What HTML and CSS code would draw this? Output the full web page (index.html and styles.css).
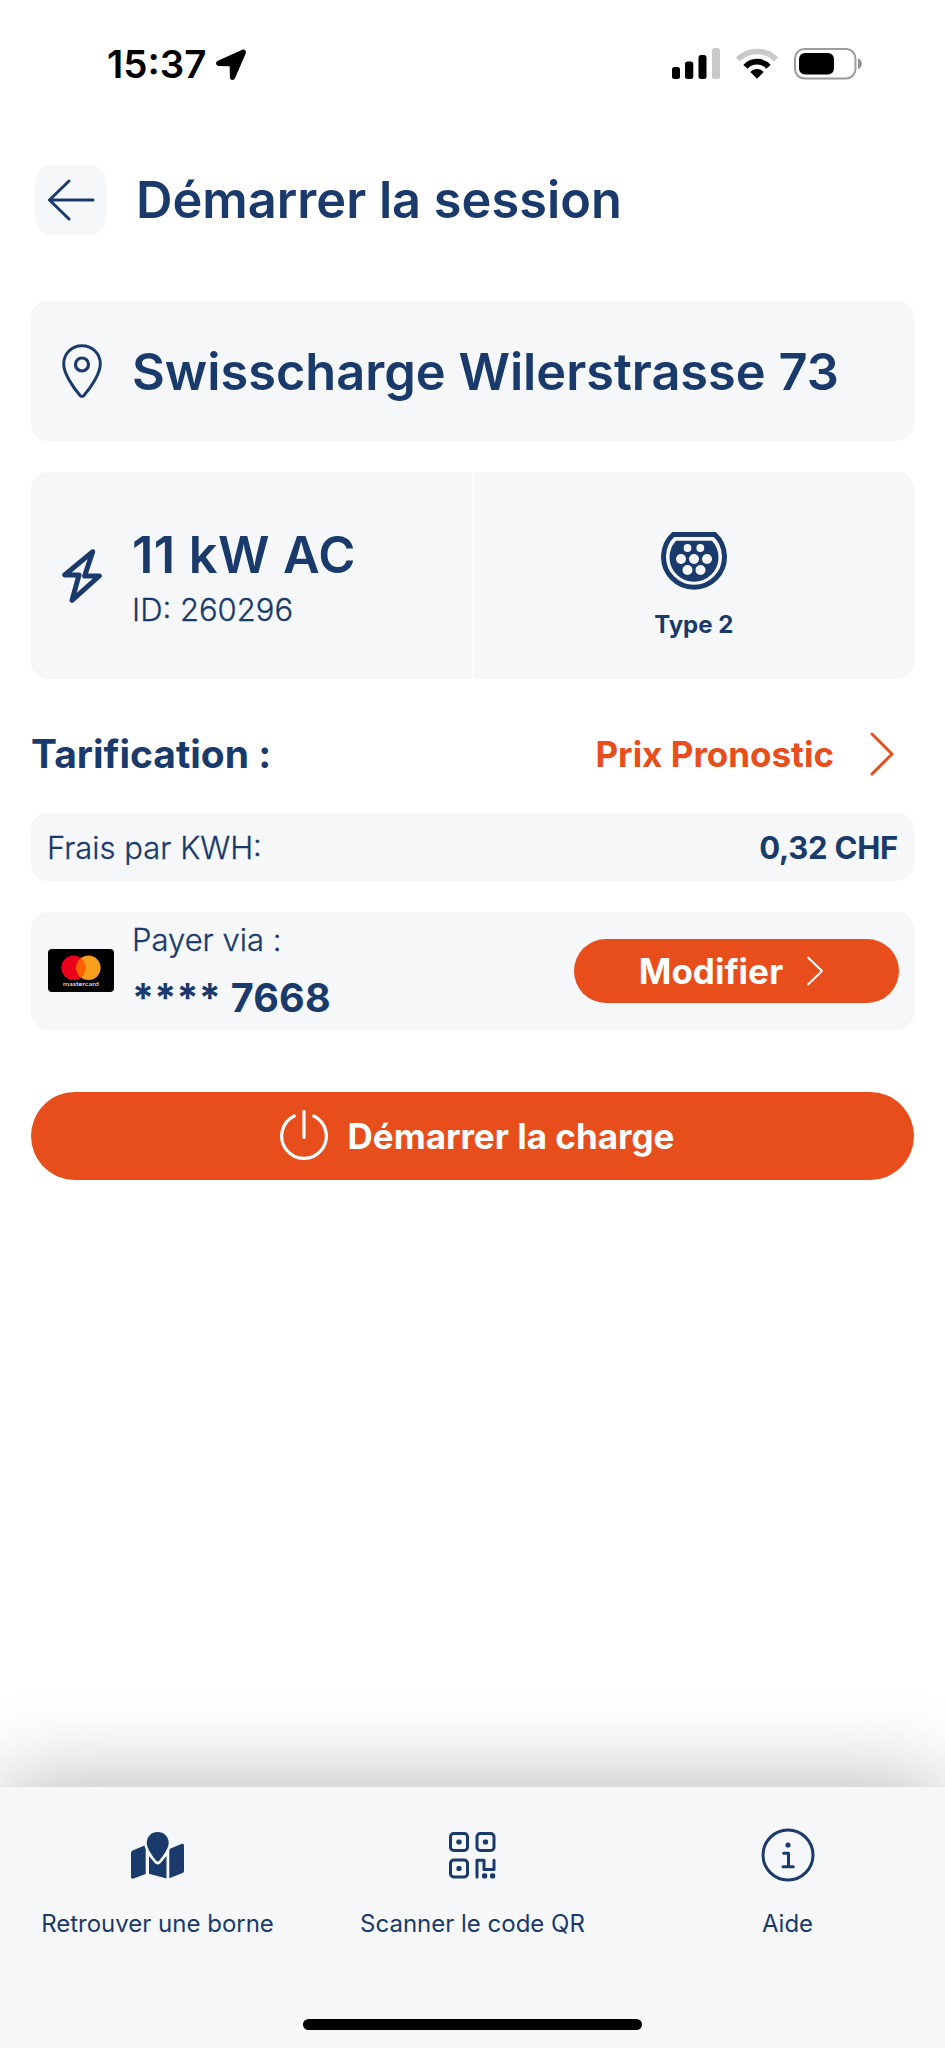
FILE: index.html
```
<!DOCTYPE html>
<html lang="fr">
<head>
<meta charset="utf-8">
<title>Démarrer la session</title>
<link rel="stylesheet" href="styles.css">
</head>
<body>
<div class="screen">
  <div class="status">
    <div class="status-left">
      <span class="time">15:37</span>
      <svg class="loc" width="32" height="32" viewBox="0 0 32 32"><path d="M2.800 11.800 26.800.9c2.600-1.100 4.900 1 3.900 3.500L20 29.200c-1.200 2.600-5 2.100-5.100-.8l-.2-11.100-11.100-.2c-2.800-.2-3.500-4.100-.8-5.300z"/></svg>
    </div>
    <div class="status-right">
      <svg width="48" height="32" viewBox="0 0 48 32"><rect x="0" y="19" width="8" height="12" rx="2.500"/><rect x="13" y="13.500" width="8.300" height="17.500" rx="2.500"/><rect x="26.500" y="7" width="8" height="24" rx="2.500"/><rect x="40" y="0" width="8" height="31" rx="2.500" fill="#c9c9c9"/></svg>
      <svg width="42" height="32" viewBox="0 0 42 32"><path d="M2 11.500C12 .8 30 .8 40 11.500" fill="none" stroke="#c9c9c9" stroke-width="5.500"/><path d="M9.500 18.800C15.500 12 26.500 12 32.500 18.800" fill="none" stroke="#000" stroke-width="5.800"/><path d="M14.300 24c3.500-4 9.900-4 13.400 0L21 30.700z"/></svg>
      <svg width="69" height="32" viewBox="0 0 69 32"><rect x="1" y="1" width="60.500" height="29.500" rx="9.500" fill="none" stroke="#9b9b9b" stroke-width="2"/><rect x="5" y="5" width="35" height="21.500" rx="6"/><path d="M64 10.500c5 1 5 9.500 0 10.500z" fill="#8e8e8e"/></svg>
    </div>
  </div>

  <header class="header">
    <button class="back" aria-label="Retour"><svg width="48" height="42" viewBox="0 0 48 42" class="line"><path d="M22 2 2.500 21 22 40M2.500 21H46" stroke-width="3"/></svg></button>
    <h1 class="title">Démarrer la session</h1>
  </header>

  <main class="content">
    <section class="card place">
      <svg class="lead line" width="40" height="54" viewBox="0 0 40 54"><path d="M20 1.700C9.500 1.700 1.700 9.800 1.700 20c0 9.500 9.500 23.500 16.200 31.300q2.100 2 4.200 0C28.800 43.500 38.300 29.500 38.300 20 38.300 9.800 30.500 1.700 20 1.700z" stroke-width="3"/><circle cx="20" cy="20.500" r="6.500" stroke-width="3.200"/></svg>
      <span class="big place-name">Swisscharge Wilerstrasse 73</span>
    </section>

    <section class="plug">
      <div class="cell power">
        <svg class="lead line" width="40" height="54" viewBox="0 0 40 54"><path d="M30.700 2.700 2.700 26H17L10 51.300 37.300 27H22.600z" stroke-width="5"/></svg>
        <div class="power-text"><span class="big kw">11 kW AC</span><span class="light ident">ID: 260296</span></div>
      </div>
      <div class="cell type">
        <svg width="66" height="58" viewBox="0 0 66 58"><path d="M12.200 2.500H53.800A30.500 30.500 0 1 1 12.200 2.500z" fill="none" stroke="#193a6a" stroke-width="5"/><path d="M15 8.700H51A24.500 24.500 0 1 1 15 8.700z" fill="#193a6a"/><g fill="#f6f7f9"><circle cx="26.500" cy="16" r="3.900"/><circle cx="39.300" cy="16" r="3.900"/><circle cx="20" cy="27" r="5"/><circle cx="33" cy="27" r="5"/><circle cx="46" cy="27" r="5"/><circle cx="26.500" cy="38" r="5"/><circle cx="39.500" cy="38" r="5"/></g></svg>
        <span class="type-name">Type 2</span>
      </div>
    </section>

    <div class="tariff-head">
      <h2 class="tariff-title">Tarification :</h2>
      <a class="forecast"><span class="forecast-text">Prix Pronostic</span><svg width="24" height="44" viewBox="0 0 24 44"><path d="M2 2 22 22 2 42" fill="none" stroke="#e84e1c" stroke-width="3" stroke-linecap="round" stroke-linejoin="round"/></svg></a>
    </div>

    <section class="card fee"><span class="light fee-label">Frais par KWH:</span><span class="amount">0,32 CHF</span></section>

    <section class="card pay">
      <svg class="mc" width="66" height="43" viewBox="0 0 66 43"><rect width="66" height="43" rx="4"/><circle cx="25.500" cy="18.800" r="12.200" fill="#eb001b"/><circle cx="40.500" cy="18.800" r="12.200" fill="#f79e1b"/><path d="M33 9.200a12.200 12.200 0 0 1 0 19.200 12.200 12.200 0 0 1 0-19.200z" fill="#ff5f00"/><text x="15" y="37.400" textLength="36" lengthAdjust="spacingAndGlyphs" class="mc-word">mastercard</text></svg>
      <div class="pay-text"><span class="light via">Payer via :</span><span class="digits">**** 7668</span></div>
      <button class="modify"><span class="modify-text">Modifier</span><svg width="18" height="30" viewBox="0 0 18 30"><path d="M2 1.500 16 15 2 28.500" fill="none" stroke="#fff" stroke-width="2" stroke-linecap="round" stroke-linejoin="round"/></svg></button>
    </section>

    <button class="start"><svg width="48" height="52" viewBox="0 0 48 52"><path d="M14.200 6a22.300 22.300 0 1 0 19.600 0M24 1.500V27.500" fill="none" stroke="#fff" stroke-width="3.200" stroke-linecap="round"/></svg><span class="start-text">Démarrer la charge</span></button>
  </main>

  <nav class="nav">
    <div class="tabs">
      <a class="tab"><svg width="54" height="54" viewBox="0 -4 54 54"><path fill="#193a6a" d="M0 21q0-1.800 1.600-2.500L14.700 13V42L2 46.700Q0 47 0 45zM18 24l6.500 7.500q2.200 1.800 4.400 0L35.500 24v22.500L18 41.700zM38.300 17 51 11.700q2-.4 2 1.700V39q0 1.400-1.500 2L38.300 46.200z"/><path d="M26.700 0C20.300 0 15.700 4.800 15.700 11c0 5 5.600 13 9.500 17.700q1.500 1.600 3 0C32.100 24 37.700 16 37.700 11 37.700 4.800 33.100 0 26.700 0z" fill="#193a6a" stroke="#f6f7f9" stroke-width="5" paint-order="stroke"/></svg><span class="tab-name">Retrouver une borne</span></a>
      <a class="tab"><svg width="47" height="54" viewBox="0 -4 47 54" class="line"><g stroke-width="3"><rect x="1.500" y="1.500" width="17" height="17" rx="3.200"/><rect x="28" y="1.500" width="17" height="17" rx="3.200"/><rect x="1.500" y="28" width="17" height="17" rx="3.200"/><path d="M28 45V28.300H35V37.500H45V28.300"/></g><g fill="#193a6a" stroke="none"><rect x="7.400" y="7.400" width="5.200" height="5.200" rx="1.800"/><rect x="33.900" y="7.400" width="5.200" height="5.200" rx="1.800"/><rect x="7.400" y="33.900" width="5.200" height="5.200" rx="1.800"/><rect x="33" y="41.300" width="5.200" height="5.200" rx="1.800"/><rect x="41" y="41.300" width="5.200" height="5.200" rx="1.800"/></g></svg><span class="tab-name">Scanner le code QR</span></a>
      <a class="tab"><svg width="54" height="54" viewBox="0 0 54 54" class="line"><circle cx="27" cy="27" r="25" stroke-width="3"/><path d="M22.700 25.200H27.500V38.800M22 38.800H32.300" stroke-width="3"/><circle cx="27" cy="17" r="2.600" fill="#193a6a" stroke="none"/></svg><span class="tab-name">Aide</span></a>
    </div>
    <div class="home"></div>
  </nav>
</div>
</body>
</html>
```
FILE: styles.css
```
* { box-sizing: border-box; }
body { margin: 0; background: #fff; font-family: Inter, "Liberation Sans", sans-serif; color: #193a6a; }
button { border: 0; padding: 0; margin: 0; font: inherit; color: inherit; }
svg { display: block; flex: none; }
span, h1, h2 { white-space: nowrap; margin: 0; }
.line { fill: none; stroke: #193a6a; stroke-linecap: round; stroke-linejoin: round; }

.screen { width: 945px; height: 2048px; display: flex; flex-direction: column; overflow: hidden; background: #fff; }

.status { height: 165px; padding: 48px 82px 0 107px; display: flex; justify-content: space-between; align-items: flex-start; color: #000; }
.status-left { display: flex; align-items: center; gap: 9px; height: 33px; }
.time { font-size: 38.500px; font-weight: 600; line-height: 33px; }
.status-right { display: flex; gap: 16px; }

.header { height: 70px; padding-left: 35px; display: flex; align-items: center; gap: 30px; }
.back { width: 71px; height: 70px; border-radius: 17px; background: #f6f7f9; display: flex; align-items: center; justify-content: center; }
.title { font-size: 50.500px; font-weight: 600; line-height: 70px; }

.content { padding: 66px 31px 0; flex: 1; display: flex; flex-direction: column; }
.card, .cell { background: #f6f7f9; border-radius: 17px; display: flex; align-items: center; }
.big { font-size: 50.500px; font-weight: 600; }
.light { font-size: 31px; font-weight: 300; -webkit-text-stroke: .3px #193a6a; }
.lead { margin-left: 31px; margin-right: 30px; }
.place { height: 140px; margin-bottom: 31px; }

.plug { height: 207px; display: grid; grid-template-columns: 1fr 1fr; column-gap: 2px; margin-bottom: 43px; }
.power { border-radius: 17px 0 0 17px; }
.power-text { display: flex; flex-direction: column; }
.kw { line-height: 68px; letter-spacing: .45px; }
.ident { line-height: 41px; }
.type { border-radius: 0 17px 17px 0; flex-direction: column; justify-content: center; padding-top: 20px; }
.type-name { font-size: 24px; font-weight: 700; line-height: 30px; margin-top: 20px; }

.tariff-head { height: 64px; display: flex; align-items: center; justify-content: space-between; padding-right: 20px; margin-bottom: 27px; }
.tariff-title { font-size: 39px; font-weight: 700; padding-bottom: 2px; }
.forecast { display: flex; align-items: center; gap: 36px; color: #e84e1c; }
.forecast-text { font-size: 35px; font-weight: 700; padding-bottom: 1px; }

.fee { height: 68px; padding: 0 16px; justify-content: space-between; margin-bottom: 31px; }
.amount { font-size: 31px; font-weight: 700; letter-spacing: -.25px; }

.pay { height: 118px; padding: 0 15px 0 17px; margin-bottom: 62px; }
.mc { margin-bottom: 1px; }
.mc-word { font-family: Lato, sans-serif; font-size: 6.500px; fill: #fff; }
.pay-text { display: flex; flex-direction: column; margin-left: 18px; }
.via { line-height: 53px; padding-bottom: 2px; }
.digits { font-size: 39.500px; font-weight: 700; line-height: 61px; letter-spacing: .2px; }
.modify { width: 325px; height: 64px; border-radius: 32px; background: #e84e1c; color: #fff; margin-left: auto; padding-right: 10px; display: flex; align-items: center; justify-content: center; gap: 23px; }
.modify-text { font-size: 35px; font-weight: 700; }

.start { height: 88px; border-radius: 44px; background: #e84e1c; color: #fff; display: flex; align-items: center; justify-content: center; gap: 20px; padding-left: 9px; }
.start-text { font-size: 35px; font-weight: 700; }

.nav { height: 261px; background: #f6f7f9; box-shadow: 0 0 94px rgba(0, 0, 0, .31); display: flex; flex-direction: column; align-items: center; }
.tabs { width: 100%; height: 232px; padding-top: 41px; display: grid; grid-template-columns: repeat(3, 1fr); }
.tab { display: flex; flex-direction: column; align-items: center; gap: 27px; }
.tab-name { font-size: 24px; font-weight: 400; line-height: 30px; }
.home { width: 339px; height: 11px; border-radius: 6px; background: #000; }
```
